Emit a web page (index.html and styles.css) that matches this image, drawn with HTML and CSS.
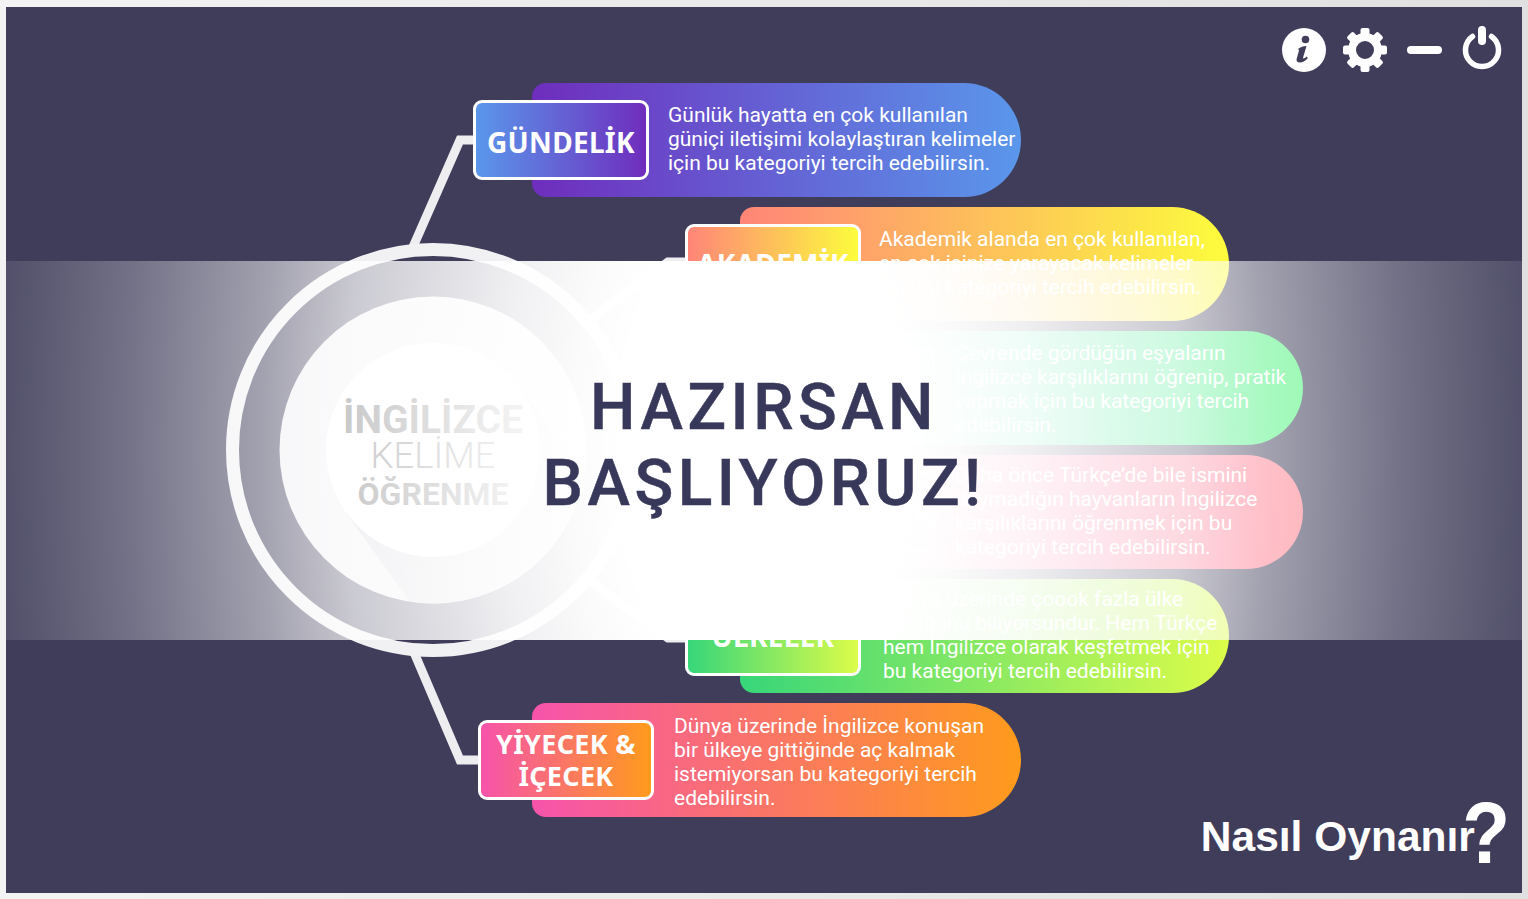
FILE: index.html
```html
<!DOCTYPE html>
<html lang="en">
<head>
    <meta charset="UTF-8">
    <title>İngilizce Kelime Öğrenme</title>
    <link rel="stylesheet" href="styles.css">
</head>
<body>
    <div class="frame">
        <!-- top right buttons -->
        <div class="toolbar">
            <svg class="tool" width="44" height="44" viewBox="0 0 44 44">
                <circle cx="22" cy="22" r="22" fill="#fff"/>
                <circle cx="23.500" cy="11.500" r="3.800" fill="#3f3d5a"/>
                <path d="M16 21c2.500-2 5-3 8.500-3l-3.400 11.500c-.4 1.400.8 1.600 3.600-.9l1.200 1.400c-2.500 3-5.400 4.600-8 4.600-2.800 0-3.800-1.700-3.200-3.900l2.500-8.900c-.2-.4-.7-.2-1.200.1z" fill="#3f3d5a"/>
            </svg>
            <svg class="tool gear" width="44" height="44" viewBox="0 0 44 44">
                <circle cx="22" cy="22" r="13" fill="none" stroke="#fff" stroke-width="8"/>
                <g fill="#fff">
                    <rect x="17.500" y="0" width="9" height="9" rx="2"/>
                    <rect x="17.500" y="0" width="9" height="9" rx="2" transform="rotate(45 22 22)"/>
                    <rect x="17.500" y="0" width="9" height="9" rx="2" transform="rotate(90 22 22)"/>
                    <rect x="17.500" y="0" width="9" height="9" rx="2" transform="rotate(135 22 22)"/>
                    <rect x="17.500" y="0" width="9" height="9" rx="2" transform="rotate(180 22 22)"/>
                    <rect x="17.500" y="0" width="9" height="9" rx="2" transform="rotate(225 22 22)"/>
                    <rect x="17.500" y="0" width="9" height="9" rx="2" transform="rotate(270 22 22)"/>
                    <rect x="17.500" y="0" width="9" height="9" rx="2" transform="rotate(315 22 22)"/>
                </g>
            </svg>
            <div class="minimize"></div>
            <svg class="tool power" width="40" height="44" viewBox="0 0 40 44">
                <path d="M10.500 10.500A16.500 16.500 0 1 0 29.500 10.500" fill="none" stroke="#fff" stroke-width="5.500" stroke-linecap="round"/>
                <path d="M20 4V15" fill="none" stroke="#fff" stroke-width="8" stroke-linecap="round"/>
            </svg>
        </div>

        <!-- connector lines -->
        <svg class="wires" width="1516" height="886" viewBox="0 0 1516 886">
            <path d="M407 240 454 133H470" />
            <path d="M585 312 662 255H682" />
            <path d="M585 575 662 631H682" />
            <path d="M407 643 454 753H475" />
        </svg>

        <div class="hub">
            <svg class="hub-art" width="414" height="414" viewBox="0 0 414 414">
                <defs>
                    <clipPath id="diskClip"><circle cx="207" cy="207" r="153.500"/></clipPath>
                    <linearGradient id="wedge" x1="0" y1="0" x2="1" y2="1">
                        <stop offset="0" stop-color="#c4c4ce"/>
                        <stop offset="1" stop-color="#eeeef2"/>
                    </linearGradient>
                </defs>
                <circle cx="207" cy="207" r="200.500" fill="none" stroke="#f1f1f4" stroke-width="13"/>
                <circle cx="207" cy="207" r="153.500" fill="#eeeef2"/>
                <polygon points="120,270 294,144 411,306 237,432" fill="url(#wedge)" clip-path="url(#diskClip)"/>
                <circle cx="207" cy="207" r="107" fill="#fff"/>
            </svg>
            <div class="hub-title">
                <div class="hub-top">İNGİLİZCE</div>
                <div class="hub-mid">KELİME</div>
                <div class="hub-low">ÖĞRENME</div>
            </div>
        </div>

        <div class="rows">
            <div class="pill pill-purple indent-1">
                <div class="tag tag-1">GÜNDELİK</div>
                <p class="blurb gap-19 nudge-up">Günlük hayatta en çok kullanılan<br>güniçi iletişimi kolaylaştıran kelimeler<br>için bu kategoriyi tercih edebilirsin.</p>
            </div>
            <div class="pill pill-yellow indent-2">
                <div class="tag tag-2">AKADEMİK</div>
                <p class="blurb gap-18 nudge-up">Akademik alanda en çok kullanılan,<br>en çok işinize yarayacak kelimeler<br>için bu kategoriyi tercih edebilirsin.</p>
            </div>
            <div class="pill pill-green indent-3">
                <div class="tag tag-3">EŞYALAR</div>
                <p class="blurb gap-20 nudge-down">Çevrende gördüğün eşyaların<br>İngilizce karşılıklarını öğrenip, pratik<br>yapmak için bu kategoriyi tercih<br>edebilirsin.</p>
            </div>
            <div class="pill pill-pink indent-3">
                <div class="tag tag-3">HAYVANLAR</div>
                <p class="blurb gap-20 nudge-up">Daha önce Türkçe’de bile ismini<br>duymadığın hayvanların İngilizce<br>karşılıklarını öğrenmek için bu<br>kategoriyi tercih edebilirsin.</p>
            </div>
            <div class="pill pill-lime indent-2">
                <div class="tag tag-2">ÜLKELER</div>
                <p class="blurb gap-22 nudge-up">Dünya üzerinde çoook fazla ülke<br>olduğunu biliyorsundur. Hem Türkçe<br>hem İngilizce olarak keşfetmek için<br>bu kategoriyi tercih edebilirsin.</p>
            </div>
            <div class="pill pill-orange indent-1">
                <div class="tag tag-6">YİYECEK &amp;<br>İÇECEK</div>
                <p class="blurb gap-20 nudge-low">Dünya üzerinde İngilizce konuşan<br>bir ülkeye gittiğinde aç kalmak<br>istemiyorsan bu kategoriyi tercih<br>edebilirsin.</p>
            </div>
        </div>

        <div class="howto">
            <span class="howto-text">Nasıl Oynanır</span><span class="howto-mark">?</span>
        </div>

        <!-- start banner, sits over everything -->
        <div class="banner">
            <h1>HAZIRSAN<br>BAŞLIYORUZ!</h1>
        </div>
    </div>
</body>
</html>
```

FILE: styles.css
```css
html, body {
    height: 100%;
}

body {
    margin: 0;
    background: linear-gradient(to right, #f3f3f3, #e0e0e0);
    font-family: "Roboto", sans-serif;
    overflow: hidden;
}

.frame {
    position: relative;
    height: 886px;
    margin: 0 6px;
    top: 7px;
    background-color: #3f3d5a;
    overflow: hidden;
}

/* top right buttons */
.toolbar {
    position: absolute;
    top: 21px;
    right: 20px;
    display: flex;
    align-items: flex-start;
}

.tool {
    display: block;
}

.gear {
    margin-left: 17px;
}

.minimize {
    width: 35px;
    height: 8px;
    margin-left: 20px;
    margin-top: 18px;
    border-radius: 4px;
    background-color: #fff;
}

.power {
    margin-left: 20px;
    margin-top: -2px;
}

/* diagram */
.wires {
    position: absolute;
    left: 0;
    top: 0;
}

.wires path {
    fill: none;
    stroke: #eeeef1;
    stroke-width: 9;
}

.hub {
    position: absolute;
    left: 220px;
    top: 236px;
    width: 414px;
    height: 414px;
    display: flex;
    justify-content: center;
    align-items: center;
}

.hub-art {
    position: absolute;
    left: 0;
    top: 0;
}

.hub-title {
    position: relative;
    text-align: center;
    color: #3a3a3e;
    margin-top: 16px;
}

.hub-top {
    font-size: 39px;
    font-weight: 700;
    line-height: 34px;
}

.hub-mid {
    font-size: 36.500px;
    font-weight: 300;
    line-height: 38px;
}

.hub-low {
    font-size: 32px;
    font-weight: 700;
    line-height: 38px;
}

/* category rows */
.rows {
    position: relative;
    display: flex;
    flex-direction: column;
    gap: 10px;
    padding-top: 76px;
}

.pill {
    width: 489px;
    height: 114px;
    display: flex;
    align-items: center;
    border-radius: 14px 57px 57px 14px;
    color: #fff;
}

.indent-1 { margin-left: 526px; }
.indent-2 { margin-left: 734px; }
.indent-3 { margin-left: 808px; }

.pill-purple { background: linear-gradient(to right, #6f2dbd, #5a97eb); }
.pill-yellow { background: linear-gradient(to right, #ff8578, #fcfc3d); }
.pill-green  { background: linear-gradient(to right, #2ad4c0, #4ff57a); }
.pill-pink   { background: linear-gradient(to right, #f653ab, #ff7f8c); }
.pill-lime   { background: linear-gradient(to right, #37d67a, #dcfc49); }
.pill-orange { background: linear-gradient(to right, #f653ab, #ff9b1c); }

.tag {
    flex: none;
    box-sizing: border-box;
    width: 176px;
    height: 80px;
    display: flex;
    align-items: center;
    justify-content: center;
    text-align: center;
    border: 3px solid #fff;
    border-radius: 9px;
    font-family: "Noto Sans", sans-serif;
    font-size: 28px;
    font-weight: 700;
    line-height: 32px;
    letter-spacing: 0.3px;
}

.tag-1 { margin-left: -59px; padding-top: 3px; }
.tag-2 { margin-left: -55px; }
.tag-3 { margin-left: -55px; }
.tag-6 { margin-left: -54px; font-size: 27px; }

.pill-purple .tag { background: linear-gradient(to right, #5a97eb, #6f2dbd); }
.pill-yellow .tag { background: linear-gradient(to right, #ff8578, #fcfc3d); }
.pill-green .tag  { background: linear-gradient(to right, #2ad4c0, #4ff57a); }
.pill-pink .tag   { background: linear-gradient(to right, #f653ab, #ff7f8c); }
.pill-lime .tag   { background: linear-gradient(to right, #37d67a, #dcfc49); }
.pill-orange .tag { background: linear-gradient(to right, #f653ab, #ff9b1c); }

.blurb {
    margin: 0;
    font-size: 21px;
    line-height: 24px;
    white-space: nowrap;
}

.gap-18 { margin-left: 18px; }
.gap-19 { margin-left: 19px; }
.gap-20 { margin-left: 20px; }
.gap-22 { margin-left: 22px; }

.nudge-up { margin-top: -2px; }
.nudge-down { margin-top: 2px; }
.nudge-low { margin-top: 4px; }

/* bottom right link */
.howto {
    position: absolute;
    right: 12px;
    bottom: 25px;
    display: flex;
    align-items: flex-end;
    color: #fff;
    font-family: "Liberation Sans", sans-serif;
    font-weight: 700;
}

.howto-text {
    font-size: 42.500px;
    line-height: 48px;
    margin-bottom: 7px;
}

.howto-mark {
    font-size: 87px;
    line-height: 70px;
    margin-left: -18px;
    transform: scaleX(0.9);
    transform-origin: right center;
}

/* banner */
.banner {
    position: absolute;
    left: 0;
    right: 0;
    top: 254px;
    height: 379px;
    display: flex;
    align-items: center;
    justify-content: center;
    background: radial-gradient(ellipse 760px 1400px at center, #fff 0%, #fff 19%, rgba(255, 255, 255, 0.98) 25%, rgba(255, 255, 255, 0.92) 35%, rgba(255, 255, 255, 0.73) 55%, rgba(255, 255, 255, 0.52) 66%, rgba(255, 255, 255, 0.27) 84%, rgba(255, 255, 255, 0.1) 100%);
}

.banner h1 {
    margin: -10px 0 0;
    text-align: center;
    color: #38385a;
    font-size: 64px;
    font-weight: 500;
    line-height: 76px;
    letter-spacing: 4.500px;
    -webkit-text-stroke: 0.5px #38385a;
}
```
